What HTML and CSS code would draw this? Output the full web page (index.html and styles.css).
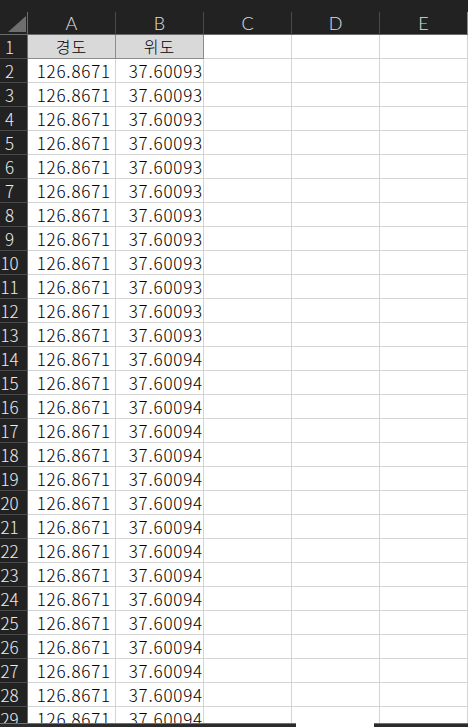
FILE: index.html
```html
<!DOCTYPE html>
<html lang="ko">
<head>
<meta charset="utf-8">
<title>Sheet</title>
<link rel="stylesheet" href="styles.css">
</head>
<body>
<div class="app">
  <div class="topstrip"></div>
  <div class="sheet">
    <div class="corner"><span class="tri"></span></div>
    <div class="ch">A</div><div class="ch">B</div><div class="ch">C</div><div class="ch">D</div><div class="ch">E</div>

    <div class="rh">1</div><div class="c hd">경도</div><div class="c hd">위도</div><div class="c"></div><div class="c"></div><div class="c"></div>
    <div class="rh">2</div><div class="c na">126.8671</div><div class="c nb">37.60093</div><div class="c"></div><div class="c"></div><div class="c"></div>
    <div class="rh">3</div><div class="c na">126.8671</div><div class="c nb">37.60093</div><div class="c"></div><div class="c"></div><div class="c"></div>
    <div class="rh">4</div><div class="c na">126.8671</div><div class="c nb">37.60093</div><div class="c"></div><div class="c"></div><div class="c"></div>
    <div class="rh">5</div><div class="c na">126.8671</div><div class="c nb">37.60093</div><div class="c"></div><div class="c"></div><div class="c"></div>
    <div class="rh">6</div><div class="c na">126.8671</div><div class="c nb">37.60093</div><div class="c"></div><div class="c"></div><div class="c"></div>
    <div class="rh">7</div><div class="c na">126.8671</div><div class="c nb">37.60093</div><div class="c"></div><div class="c"></div><div class="c"></div>
    <div class="rh">8</div><div class="c na">126.8671</div><div class="c nb">37.60093</div><div class="c"></div><div class="c"></div><div class="c"></div>
    <div class="rh">9</div><div class="c na">126.8671</div><div class="c nb">37.60093</div><div class="c"></div><div class="c"></div><div class="c"></div>
    <div class="rh">10</div><div class="c na">126.8671</div><div class="c nb">37.60093</div><div class="c"></div><div class="c"></div><div class="c"></div>
    <div class="rh">11</div><div class="c na">126.8671</div><div class="c nb">37.60093</div><div class="c"></div><div class="c"></div><div class="c"></div>
    <div class="rh">12</div><div class="c na">126.8671</div><div class="c nb">37.60093</div><div class="c"></div><div class="c"></div><div class="c"></div>
    <div class="rh">13</div><div class="c na">126.8671</div><div class="c nb">37.60093</div><div class="c"></div><div class="c"></div><div class="c"></div>
    <div class="rh">14</div><div class="c na">126.8671</div><div class="c nb">37.60094</div><div class="c"></div><div class="c"></div><div class="c"></div>
    <div class="rh">15</div><div class="c na">126.8671</div><div class="c nb">37.60094</div><div class="c"></div><div class="c"></div><div class="c"></div>
    <div class="rh">16</div><div class="c na">126.8671</div><div class="c nb">37.60094</div><div class="c"></div><div class="c"></div><div class="c"></div>
    <div class="rh">17</div><div class="c na">126.8671</div><div class="c nb">37.60094</div><div class="c"></div><div class="c"></div><div class="c"></div>
    <div class="rh">18</div><div class="c na">126.8671</div><div class="c nb">37.60094</div><div class="c"></div><div class="c"></div><div class="c"></div>
    <div class="rh">19</div><div class="c na">126.8671</div><div class="c nb">37.60094</div><div class="c"></div><div class="c"></div><div class="c"></div>
    <div class="rh">20</div><div class="c na">126.8671</div><div class="c nb">37.60094</div><div class="c"></div><div class="c"></div><div class="c"></div>
    <div class="rh">21</div><div class="c na">126.8671</div><div class="c nb">37.60094</div><div class="c"></div><div class="c"></div><div class="c"></div>
    <div class="rh">22</div><div class="c na">126.8671</div><div class="c nb">37.60094</div><div class="c"></div><div class="c"></div><div class="c"></div>
    <div class="rh">23</div><div class="c na">126.8671</div><div class="c nb">37.60094</div><div class="c"></div><div class="c"></div><div class="c"></div>
    <div class="rh">24</div><div class="c na">126.8671</div><div class="c nb">37.60094</div><div class="c"></div><div class="c"></div><div class="c"></div>
    <div class="rh">25</div><div class="c na">126.8671</div><div class="c nb">37.60094</div><div class="c"></div><div class="c"></div><div class="c"></div>
    <div class="rh">26</div><div class="c na">126.8671</div><div class="c nb">37.60094</div><div class="c"></div><div class="c"></div><div class="c"></div>
    <div class="rh">27</div><div class="c na">126.8671</div><div class="c nb">37.60094</div><div class="c"></div><div class="c"></div><div class="c"></div>
    <div class="rh">28</div><div class="c na">126.8671</div><div class="c nb">37.60094</div><div class="c"></div><div class="c"></div><div class="c"></div>
    <div class="rh">29</div><div class="c na">126.8671</div><div class="c nb">37.60094</div><div class="c"></div><div class="c"></div><div class="c"></div>
  </div>
  <div class="bottom">
    <div class="bar bar-left"></div>
    <div class="bar bar-right"></div>
  </div>
</div>
</body>
</html>
```
FILE: styles.css
```css
* { box-sizing: border-box; }
html, body { margin: 0; padding: 0; background: #ffffff; }
body {
  font-family: "Noto Sans CJK KR", "Noto Sans", sans-serif;
  font-weight: 300;
  width: 468px;
  height: 727px;
  overflow: hidden;
}
.app {
  display: flex;
  flex-direction: column;
  height: 727px;
}
.topstrip {
  height: 12px;
  background: #222222;
  flex: none;
}
.sheet {
  flex: 1;
  min-height: 0;
  overflow: hidden;
  display: grid;
  grid-template-columns: 28px repeat(5, 88px);
  grid-template-rows: 23px;
  grid-auto-rows: 24px;
  align-content: start;
}
.corner {
  background: #222222;
  border-right: 1px solid #6a6a6a;
  border-bottom: 1px solid #6a6a6a;
  display: flex;
  align-items: flex-end;
  padding: 0 0 2px 8px;
}
.tri {
  width: 18px;
  height: 16px;
  background: #6e6e6e;
  clip-path: polygon(100% 0, 100% 100%, 0 100%);
}
.ch {
  background: #222222;
  color: #e0e0e0;
  border-right: 1px solid #4a4a4a;
  border-bottom: 1px solid #6a6a6a;
  font-family: "Lato", "Noto Sans", sans-serif;
  font-size: 18px;
  font-weight: 300;
  line-height: 22px;
  text-align: center;
}
.ch:nth-child(6) { border-right-color: #8a8a8a; }
.rh {
  background: #222222;
  color: #ececec;
  border-right: 1px solid #6a6a6a;
  border-bottom: 1px solid #4a4a4a;
  font-size: 17px;
  line-height: 23px;
  text-align: center;
  padding-right: 8px;
  white-space: nowrap;
  overflow: hidden;
}
.c {
  border-right: 1px solid #d4d4d4;
  border-bottom: 1px solid #d4d4d4;
  color: #000000;
  font-size: 17px;
  line-height: 23px;
  white-space: nowrap;
  overflow: hidden;
}
.hd {
  background: #d9d9d9;
  text-align: center;
  border-right-color: #8c8c8c;
  border-bottom-color: #8c8c8c;
  font-size: 16px;
  letter-spacing: 1px;
}
.na, .nb { text-align: right; letter-spacing: 0.8px; }
.na { padding-right: 4px; }
.nb { padding-right: 0; }
.bottom {
  height: 4px;
  flex: none;
  display: flex;
  justify-content: space-between;
}
.bar {
  background: #2b2b2b;
  border-top: 1px solid #707070;
}
.bar-left { width: 296px; }
.bar-right { width: 94px; }
```
